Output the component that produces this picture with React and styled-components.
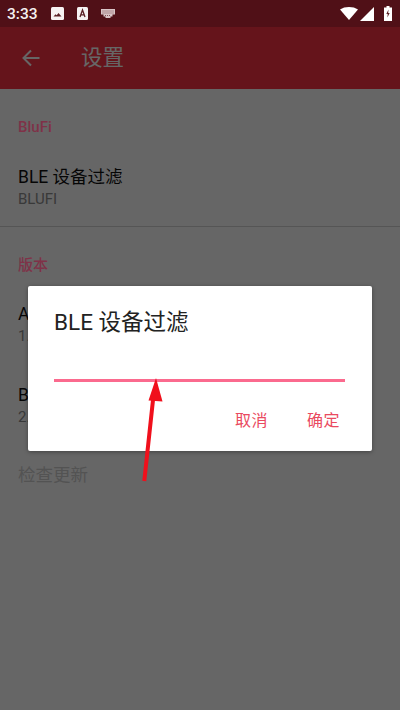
import React from "react";
import styled, { createGlobalStyle } from "styled-components";

const Global = createGlobalStyle`
  html, body { margin: 0; padding: 0; }
  body { font-family: Roboto, "Noto Sans CJK SC", sans-serif; }
`;

const cjk = `Roboto, "Noto Sans CJK SC", sans-serif`;

const Screen = styled.div`
  position: relative;
  width: 400px;
  height: 710px;
  overflow: hidden;
  background: #ffffff;
  font-family: ${cjk};
`;

const StatusBar = styled.div`
  height: 27px;
  background: #c8293a;
`;

const AppBar = styled.header`
  height: 62px;
  background: #fd3244;
  display: flex;
  align-items: center;
  padding: 0 0 0 21px;
  box-sizing: border-box;
`;

const AppTitle = styled.h1`
  margin: 0 0 0 40px;
  font-size: 21.5px;
  line-height: 28px;
  font-weight: 400;
  color: #fff;
`;

const Content = styled.main`
  display: flex;
  flex-direction: column;
`;

const Section = styled.section`
  padding: ${(p) => p.$top}px 18px 0;
  display: flex;
  flex-direction: column;
`;

const SectionTitle = styled.div`
  position: relative;
  z-index: 1;
  font-size: 15px;
  line-height: 18px;
  font-weight: 500;
  color: #7f3248;
  height: 18px;
`;

const Row = styled.div`
  margin-top: ${(p) => p.$top}px;
  display: flex;
  flex-direction: column;
`;

const RowTitle = styled.div`
  font-size: 17.5px;
  line-height: 24px;
  color: ${(p) => (p.$disabled ? "#cfcfcf" : "#111")};
`;

const RowValue = styled.div`
  font-size: 15px;
  line-height: 20px;
  color: #8f8f8f;
`;

const Divider = styled.div`
  height: 1px;
  background: #d5d5d5;
  margin-top: 17px;
`;

const Scrim = styled.div`
  position: absolute;
  inset: 0;
  background: rgba(0, 0, 0, 0.6);
`;

const StatusOverlay = styled.div`
  position: absolute;
  top: 0;
  left: 0;
  right: 0;
  height: 27px;
  display: flex;
  align-items: center;
  padding: 0 8px 0 7px;
  box-sizing: border-box;
`;

const Clock = styled.span`
  font-size: 15.5px;
  font-weight: 500;
  color: #f4f0f0;
  width: 44px;
`;

const NotifIcons = styled.div`
  display: flex;
  align-items: center;
  gap: 13px;
  flex: 1;
`;

const SysIcons = styled.div`
  display: flex;
  align-items: center;
  gap: 2px;
`;

const Dialog = styled.div`
  position: absolute;
  left: 28px;
  top: 286px;
  width: 344px;
  height: 165px;
  background: #fff;
  border-radius: 2px;
  box-shadow: 0 1px 4px rgba(0, 0, 0, 0.35);
  padding: 21px 27px 0 26px;
  box-sizing: border-box;
  display: flex;
  flex-direction: column;
`;

const DialogTitle = styled.div`
  font-size: 22.5px;
  line-height: 30px;
  color: #222;
`;

const InputLine = styled.div`
  height: 3px;
  background: #fb6a8e;
  margin-top: 42px;
`;

const Actions = styled.div`
  display: flex;
  justify-content: flex-end;
  gap: 39px;
  margin-top: 28px;
  padding-right: 5px;
`;

const ActionButton = styled.button`
  border: 0;
  padding: 0;
  background: none;
  font-family: ${cjk};
  font-size: 16px;
  line-height: 22px;
  letter-spacing: 0.5px;
  color: #ea4a60;
`;

const Annotation = styled.svg`
  position: absolute;
  left: 135px;
  top: 372px;
`;

const BackIcon = styled.svg`
  display: block;
`;

const App = () => (
  <Screen>
    <Global />
    <StatusBar />
    <AppBar>
      <BackIcon width="20" height="20" viewBox="0 0 20 20">
        <path d="M18.5 10H3M10 2.5L2.5 10l7.5 7.5" fill="none" stroke="#fff" strokeWidth="2" />
      </BackIcon>
      <AppTitle>设置</AppTitle>
    </AppBar>
    <Content>
      <Section $top={29}>
        <SectionTitle>BluFi</SectionTitle>
        <Row $top={29}>
          <RowTitle>BLE 设备过滤</RowTitle>
          <RowValue>BLUFI</RowValue>
        </Row>
      </Section>
      <Divider />
      <Section $top={29}>
        <SectionTitle>版本</SectionTitle>
        <Row $top={28}>
          <RowTitle>APP 版本</RowTitle>
          <RowValue>1.6.5</RowValue>
        </Row>
        <Row $top={37}>
          <RowTitle>BluFi 版本</RowTitle>
          <RowValue>2.3</RowValue>
        </Row>
        <Row $top={36}>
          <RowTitle $disabled>检查更新</RowTitle>
        </Row>
      </Section>
    </Content>
    <Scrim />
    <StatusOverlay>
      <Clock>3:33</Clock>
      <NotifIcons>
        <svg width="13" height="13" viewBox="0 0 13 13">
          <rect width="13" height="13" rx="1.5" fill="#f6f2f2" />
          <path d="M2.5 9.5l2-2.2 1.2 1 1.800-2.300 3 3.500z" fill="#5a2025" />
        </svg>
        <svg width="11" height="13" viewBox="0 0 11 13">
          <rect width="11" height="13" rx="1.5" fill="#f6f2f2" />
          <path d="M3 10l2.500-7L8 10M4 7.800h3" fill="none" stroke="#5a2025" strokeWidth="1.3" />
        </svg>
        <svg width="14" height="9" viewBox="0 0 14 9">
          <path d="M0 0h14v5.500h-2.500V7.500H9.500V9h-5V7.500H2.500V5.500H0z" fill="#d8c4c6" />
          <path d="M1.500 2h11M1.500 4h11M4 6.500h6" stroke="#5a2025" strokeWidth=".7" strokeDasharray="1 1" />
        </svg>
      </NotifIcons>
      <SysIcons>
        <svg width="18" height="13" viewBox="0 0 18 13">
          <path d="M0 2.500C2.500.8 5.600 0 9 0s6.500.8 9 2.500L9 13z" fill="#fff" />
        </svg>
        <svg width="14" height="14" viewBox="0 0 14 14">
          <path d="M0 14L14 0v14z" fill="#fff" />
        </svg>
        <svg width="8" height="15" viewBox="0 0 8 15" style={{ marginLeft: 8 }}>
          <path d="M2.500 0h3v1.500H8V15H0V1.500h2.500z" fill="#fff" />
          <path d="M4.500 3.500L2.300 8h1.400l-.3 3.500L5.700 7H4.200z" fill="#5a2025" />
        </svg>
      </SysIcons>
    </StatusOverlay>
    <Dialog>
      <DialogTitle>BLE 设备过滤</DialogTitle>
      <InputLine />
      <Actions>
        <ActionButton>取消</ActionButton>
        <ActionButton>确定</ActionButton>
      </Actions>
    </Dialog>
    <Annotation width="40" height="112" viewBox="0 0 40 112">
      <path d="M9.500 107L18 28" fill="none" stroke="#f0101c" strokeWidth="4" strokeLinecap="square" />
      <path d="M21 6L13.500 28.500 27.500 29.500z" fill="#f0101c" />
    </Annotation>
  </Screen>
);

export default App;
